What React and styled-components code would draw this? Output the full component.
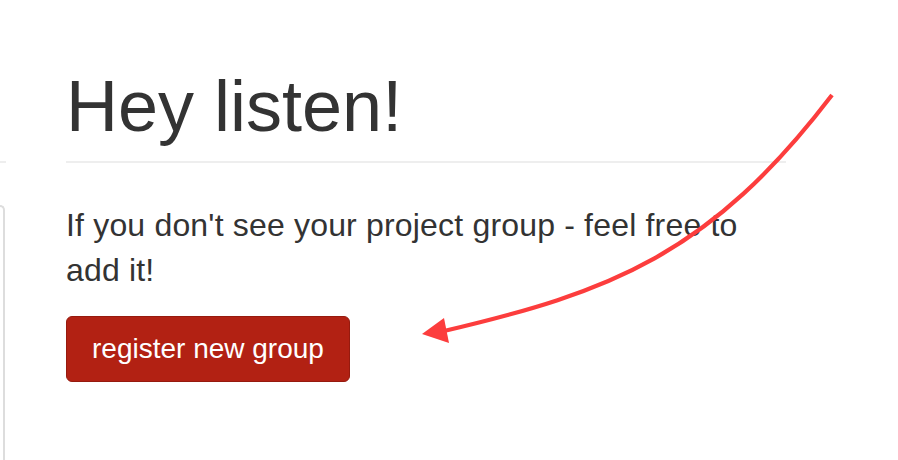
import React from 'react';
import styled, { createGlobalStyle } from 'styled-components';

const GlobalStyle = createGlobalStyle`
  html, body {
    margin: 0;
    padding: 0;
    background: #fff;
  }
  body {
    font-family: "Liberation Sans", Arial, Helvetica, sans-serif;
    color: #333;
  }
`;

const Arrow = () => (
  <ArrowLayer width="898" height="460" viewBox="0 0 898 460">
    <path
      d="M832 95 C 710 255, 610 292, 444 331"
      fill="none"
      stroke="#fc3d3d"
      strokeWidth="4.2"
      strokeLinecap="butt"
    />
    <polygon points="422,334 444,318 449,343" fill="#fc3d3d" />
  </ArrowLayer>
);

const App = () => {
  return (
    <>
      <GlobalStyle />
      <Page>
        <Sidebar>
          <SideHeader />
          <SidePanel />
        </Sidebar>
        <Main>
          <PageHeader>
            <Title>Hey listen!</Title>
          </PageHeader>
          <Text>If you don't see your project group - feel free to add it!</Text>
          <Button type="button">register new group</Button>
        </Main>
        <Arrow />
      </Page>
    </>
  );
};

const Page = styled.div`
  position: relative;
  width: 898px;
  height: 460px;
  overflow: hidden;
  display: flex;
  gap: 60px;
`;

const Sidebar = styled.div`
  width: 6px;
  display: flex;
  flex-direction: column;
`;

const SideHeader = styled.div`
  height: 161px;
  border-bottom: 2px solid #eee;
`;

const SidePanel = styled.div`
  flex: 1;
  margin-top: 42px;
  margin-right: 1px;
  border: 2px solid #ddd;
  border-left: none;
  border-bottom: none;
  border-radius: 0 6px 0 0;
`;

const Main = styled.div`
  width: 720px;
  padding-top: 66px;
`;

const PageHeader = styled.div`
  padding-bottom: 15px;
  border-bottom: 2px solid #eee;
`;

const Title = styled.h1`
  margin: 0;
  font-size: 72px;
  line-height: 80px;
  font-weight: normal;
  color: #333;
`;

const Text = styled.p`
  margin: 40px 0 24px;
  font-size: 32px;
  line-height: 44.5px;
  letter-spacing: 0.18px;
  color: #333;
`;

const Button = styled.button`
  display: inline-block;
  height: 66px;
  padding: 12px 25px;
  font-family: "Liberation Sans", Arial, Helvetica, sans-serif;
  font-size: 28px;
  line-height: 40px;
  color: #fff;
  background: #b22113;
  border: 1px solid #961a0e;
  border-radius: 6px;
  cursor: pointer;
`;

const ArrowLayer = styled.svg`
  position: absolute;
  top: 0;
  left: 0;
  pointer-events: none;
`;

export default App;
